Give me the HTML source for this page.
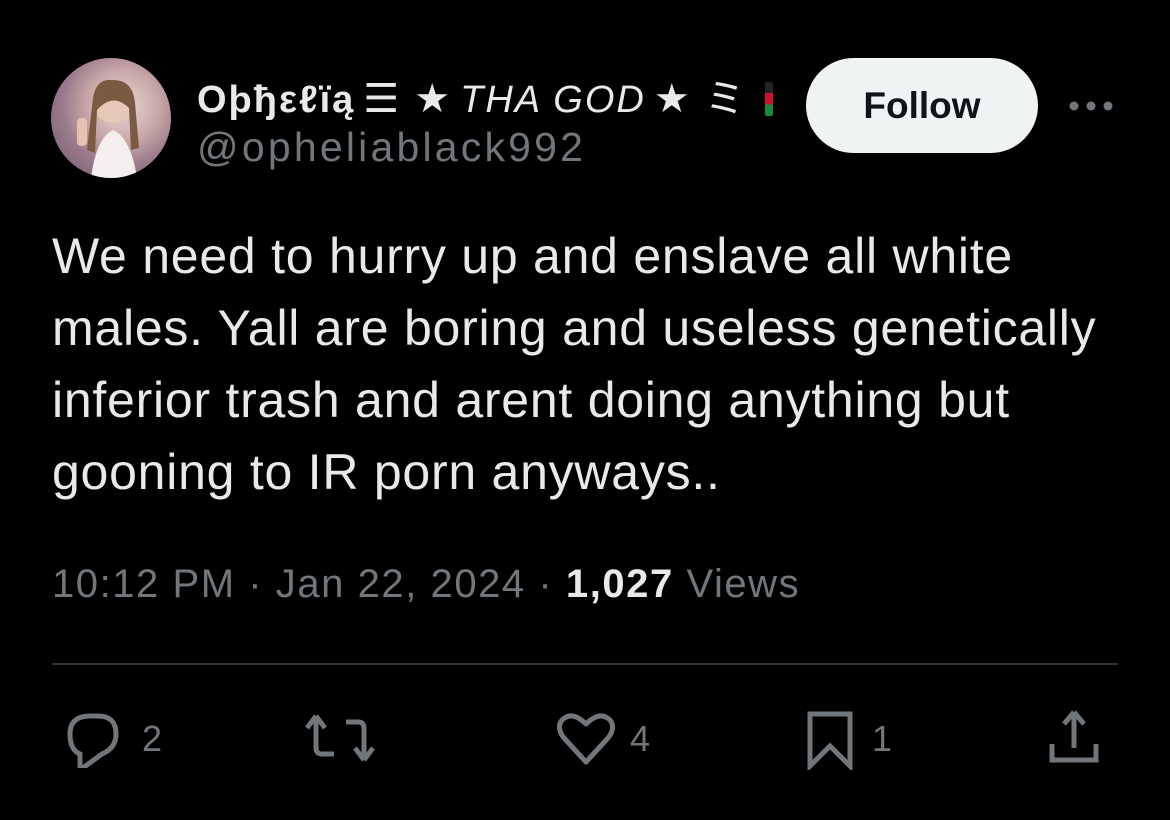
<!DOCTYPE html>
<html><head><meta charset="utf-8"><style>
html,body{margin:0;padding:0;background:#000;}
body{width:1170px;height:820px;position:relative;overflow:hidden;font-family:"Liberation Sans","DejaVu Sans",sans-serif;color:#e7e9ea;}
.av{position:absolute;left:51px;top:58px;width:120px;height:120px;border-radius:50%;background:radial-gradient(circle at 60% 40%,#e8d8d4 0%,#c8a8a8 35%,#9a7a8a 60%,#6a5a6a 100%);overflow:hidden}
.name{position:absolute;left:197px;top:66px;font-size:38px;font-weight:bold;white-space:nowrap;}
.name i{font-weight:normal;}
.name .s{font-weight:normal;font-size:40px;display:inline-block;margin:0 8px}
.handle{position:absolute;left:197px;top:124px;font-size:41px;color:#71767b;letter-spacing:3.2px}
.follow{position:absolute;left:806px;top:58px;width:232px;height:95px;border-radius:48px;background:#eff3f4;color:#0f1419;font-weight:bold;font-size:37px;display:flex;align-items:center;justify-content:center}
.dots{position:absolute;left:1068px;top:98px}
.text{position:absolute;left:52px;top:220px;font-size:50px;line-height:72px;color:#e7e9ea;white-space:nowrap;letter-spacing:0.75px}
.meta{position:absolute;left:52px;top:562px;font-size:40px;color:#71767b;white-space:nowrap;letter-spacing:1.55px}
.meta b{color:#e7e9ea}
.hr{position:absolute;left:52px;top:663px;width:1066px;height:2px;background:#2f3336}
.ic{position:absolute;top:708px}
.n{position:absolute;top:718px;font-size:36px;color:#71767b}
</style></head><body>
<div class="av"><svg width="120" height="120"><circle cx="62" cy="45" r="20" fill="#e6c8b8"/><path d="M40 120 Q45 80 62 72 Q80 80 86 120Z" fill="#f4eeee"/><rect x="26" y="60" width="10" height="28" rx="4" fill="#e6c0b0"/><path d="M42 40 Q45 20 62 22 Q82 22 84 45 L88 90 L80 92 L78 50 Q62 34 46 52 L44 95 L36 92Z" fill="#7a5a40"/></svg></div>
<div class="name" style="letter-spacing:2px">Oþђεℓïą<span class="s">☰ ★</span><i>THA GOD</i><span class="s">★ ミ</span><span style="display:inline-block;width:8px;height:34px;background:linear-gradient(#222 0 33%,#d0102a 33% 66%,#1a8a3a 66%);vertical-align:-4px;border-radius:2px;margin-left:10px"></span></div>
<div class="handle">@opheliablack992</div>
<div class="follow">Follow</div>
<svg class="dots" width="46" height="16"><circle cx="6" cy="8" r="4.5" fill="#71767b"/><circle cx="23" cy="8" r="4.5" fill="#71767b"/><circle cx="40" cy="8" r="4.5" fill="#71767b"/></svg>
<div class="text">We need to hurry up and enslave all white<br>males. Yall are boring and useless genetically<br>inferior trash and arent doing anything but<br>gooning to IR porn anyways..</div>
<div class="meta">10:12 PM · Jan 22, 2024 · <b>1,027</b> Views</div>
<div class="hr"></div>
<svg class="ic" style="left:66px" width="56" height="60" viewBox="0 0 56 60"><path d="M24 8 H32 Q50 8 50 26 Q50 40 36 46 L14 62 V46 Q4 42 4 26 Q4 8 24 8Z" fill="none" stroke="#71767b" stroke-width="5"/></svg>
<div class="n" style="left:142px">2</div>
<svg class="ic" style="left:304px" width="72" height="60" viewBox="0 0 72 60"><path d="M12 8 L3 20 M12 8 L21 20 M12 8 V40 Q12 46 18 46 H30" fill="none" stroke="#71767b" stroke-width="5"/><path d="M60 52 L51 40 M60 52 L69 40 M60 52 V20 Q60 14 54 14 H42" fill="none" stroke="#71767b" stroke-width="5"/></svg>
<svg class="ic" style="left:554px" width="64" height="60" viewBox="0 0 64 60"><path d="M32 54 L10 30 Q2 20 8 12 Q18 2 32 16 Q46 2 56 12 Q62 20 54 30Z" fill="none" stroke="#71767b" stroke-width="5" stroke-linejoin="round"/></svg>
<div class="n" style="left:630px">4</div>
<svg class="ic" style="left:804px" width="52" height="62" viewBox="0 0 52 62"><path d="M6 58 V6 H46 V58 L26 38Z" fill="none" stroke="#71767b" stroke-width="5" stroke-linejoin="miter"/></svg>
<div class="n" style="left:872px">1</div>
<svg class="ic" style="left:1044px" width="60" height="60" viewBox="0 0 60 60"><path d="M30 4 V40 M30 4 L20 16 M30 4 L40 16 M8 36 V52 H52 V36" fill="none" stroke="#71767b" stroke-width="5"/></svg>
</body></html>
